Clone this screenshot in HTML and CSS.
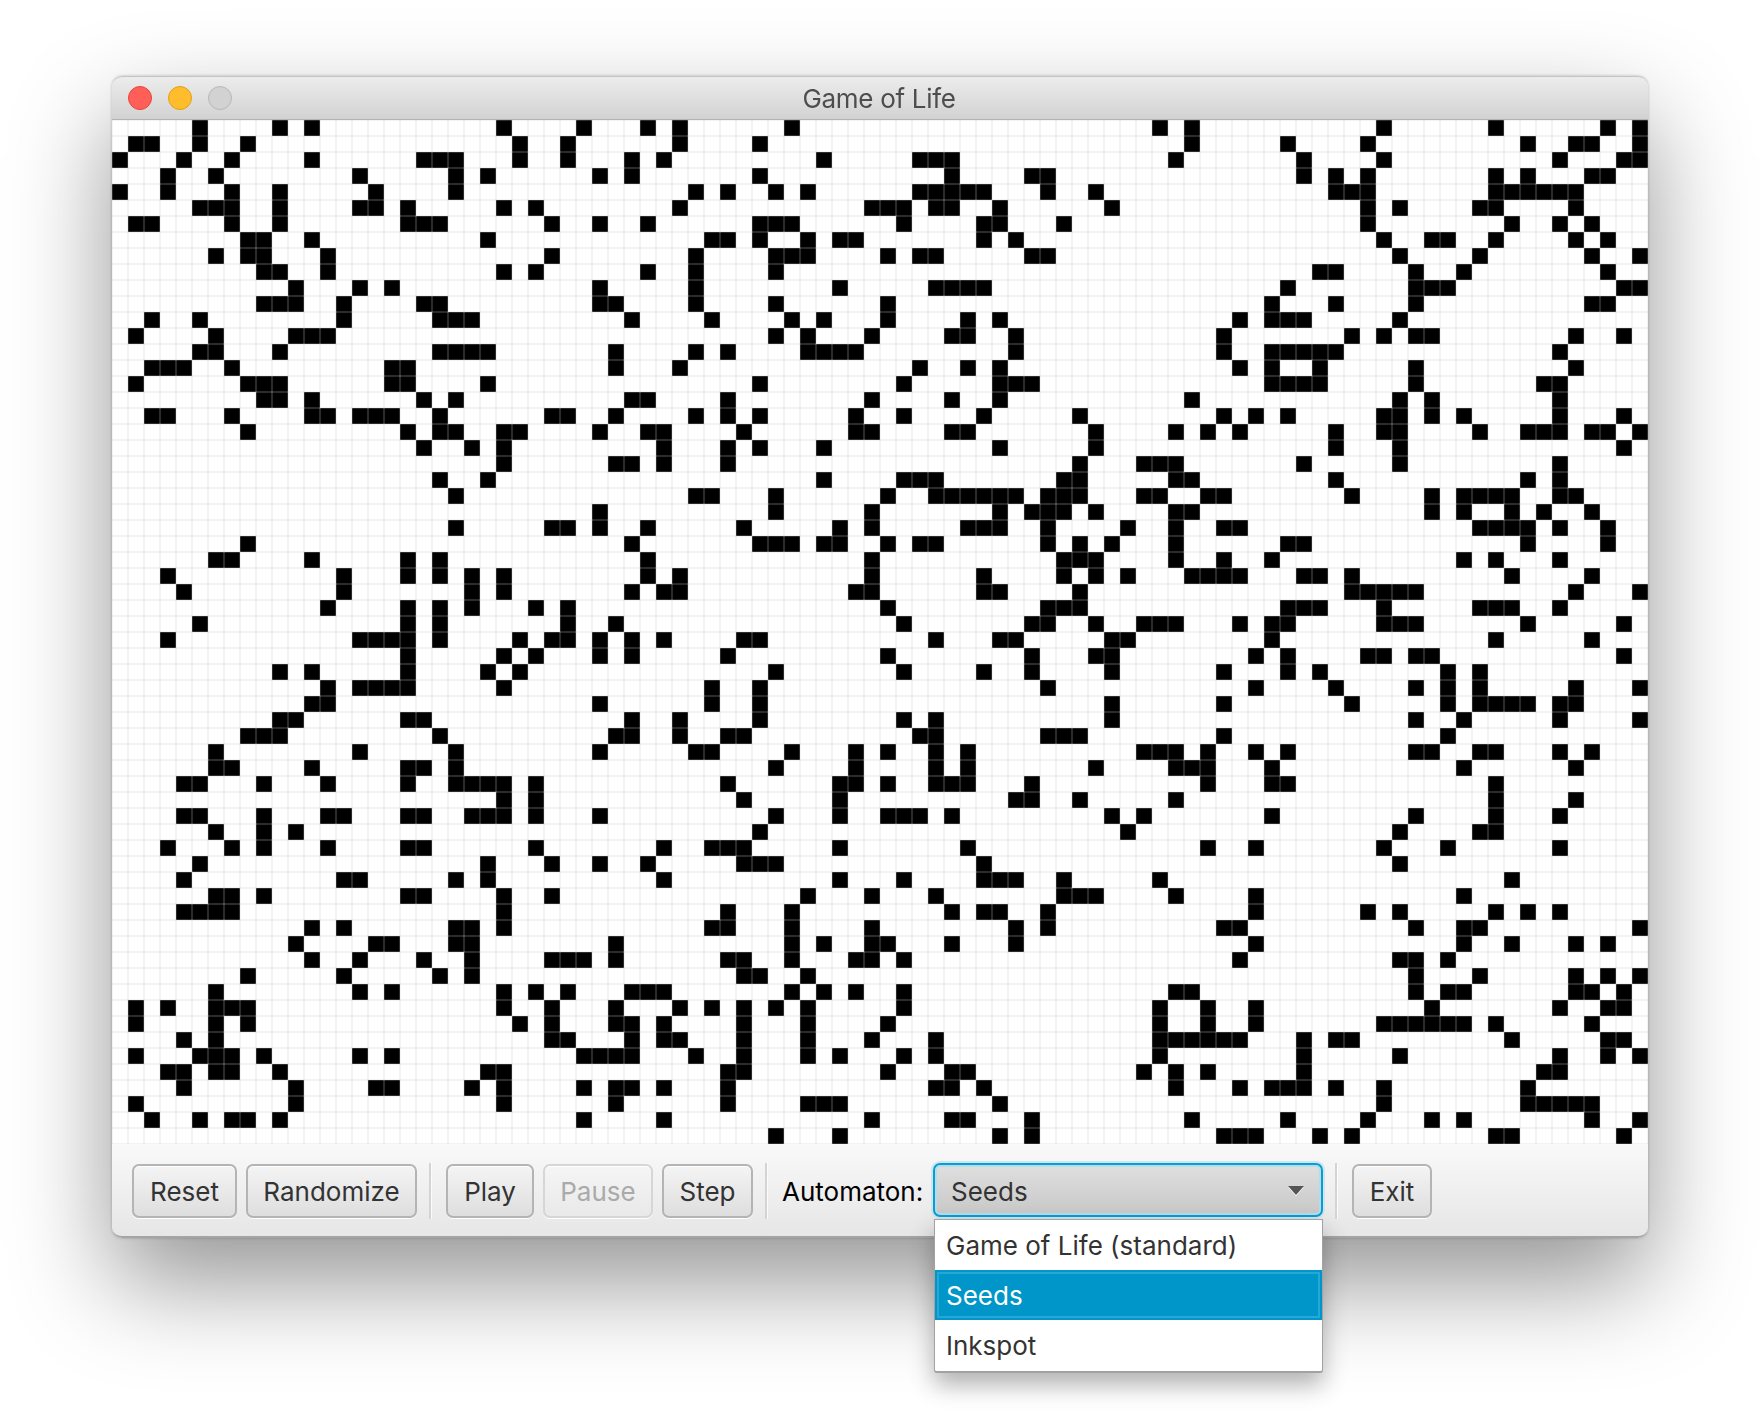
FILE: index.html
```html
<!DOCTYPE html>
<html lang="en">
<head>
<meta charset="utf-8">
<title>Game of Life</title>
<link rel="stylesheet" href="styles.css">
</head>
<body>
<main class="desktop">
  <section class="window">
    <header class="titlebar">
      <div class="lights">
        <span class="light light-close"></span>
        <span class="light light-min"></span>
        <span class="light light-zoom"></span>
      </div>
      <h1 class="title">Game of Life</h1>
    </header>
    <canvas id="board" class="board" width="1536" height="1024"></canvas>
    <div class="toolbar">
      <button class="btn btn-reset">Reset</button>
      <button class="btn btn-randomize">Randomize</button>
      <span class="sep"></span>
      <button class="btn btn-play">Play</button>
      <button class="btn btn-pause" disabled>Pause</button>
      <button class="btn btn-step">Step</button>
      <span class="sep"></span>
      <span class="label">Automaton:</span>
      <div class="combo">
        <div class="combo-face">
          <span class="combo-value">Seeds</span>
          <span class="combo-arrow"></span>
        </div>
        <ul class="popup">
          <li class="popup-item">Game of Life (standard)</li>
          <li class="popup-item popup-item-selected">Seeds</li>
          <li class="popup-item">Inkspot</li>
        </ul>
      </div>
      <span class="sep"></span>
      <button class="btn btn-exit">Exit</button>
    </div>
  </section>
</main>
<script src="script.js"></script>
</body>
</html>
```

FILE: styles.css
```css
* { box-sizing: border-box; }

html, body {
  margin: 0;
  padding: 0;
  background: #fff;
}

body {
  font-family: Inter, "Liberation Sans", sans-serif;
  font-size: 26px;
  overflow: hidden;
}

.desktop {
  width: 1760px;
  height: 1414px;
  padding: 76px 112px 0;
}

.window {
  width: 1536px;
  height: 1162px;
  display: flex;
  flex-direction: column;
  border-radius: 10px;
  box-shadow: 0 44px 100px rgba(0, 0, 0, .42), 0 0 3px rgba(0, 0, 0, .25);
}

.titlebar {
  position: relative;
  height: 44px;
  flex: none;
  display: flex;
  align-items: center;
  justify-content: center;
  background: linear-gradient(#ececec, #d2d2d2);
  border-top: 1px solid #c4c4c4;
  border-bottom: 1px solid #b2b2b2;
  border-radius: 10px 10px 0 0;
}

.lights {
  position: absolute;
  left: 16px;
  top: 9px;
  display: flex;
  gap: 16px;
}

.light {
  width: 24px;
  height: 24px;
  border-radius: 50%;
  border: 1px solid;
}

.light-close { background: #ff5f57; border-color: #e2463f; }
.light-min { background: #ffbd2e; border-color: #e1a116; }
.light-zoom { background: #d2d2d2; border-color: #b8b8b8; }

.title {
  margin: 0;
  padding: 2px 2px 0 0;
  font-size: 26px;
  font-weight: 400;
  line-height: 44px;
  letter-spacing: -.3px;
  color: #4d4d4d;
}

.board {
  display: block;
  flex: none;
  width: 1536px;
  height: 1024px;
  background: #fff;
}

.toolbar {
  flex: 1;
  display: flex;
  align-items: flex-start;
  gap: 9px;
  padding: 20px 20px 0;
  background: linear-gradient(#f9f9f9, #e6e6e6);
  border-bottom: 2px solid #a4a4a4;
  border-radius: 0 0 10px 10px;
}

.btn {
  flex: none;
  height: 54px;
  padding: 1px 0 0;
  font: inherit;
  color: #333;
  background: linear-gradient(#f4f4f4, #dedede);
  border: 2px solid #b4b4b4;
  border-radius: 7px;
  box-shadow: inset 0 1px 0 #fff, 0 1px 0 #fff;
}

.btn:disabled {
  color: #aaa;
  background: linear-gradient(#f5f5f5, #e9e9e9);
  border-color: #d6d6d6;
}

.btn-reset { width: 105px; }
.btn-randomize { width: 171px; }
.btn-play { width: 88px; }
.btn-pause { width: 110px; }
.btn-step { width: 91px; }
.btn-exit { width: 80px; }

.sep {
  flex: none;
  width: 3px;
  height: 56px;
  margin: -1px 5px 0 3px;
  background: #d4d4d4;
  border-right: 1px solid #fbfbfb;
}

.label {
  flex: none;
  width: 142px;
  line-height: 55px;
  color: #000;
}

.combo {
  position: relative;
  flex: none;
  width: 390px;
  height: 54px;
  margin-top: -1px;
}

.combo-face {
  height: 100%;
  display: flex;
  align-items: center;
  justify-content: space-between;
  padding: 0 17px 0 16px;
  color: #333;
  background: linear-gradient(#dfdfdf, #c8c8c8);
  border: 2px solid #02a0d8;
  border-radius: 7px;
  box-shadow: inset 0 0 0 2px #b9dbe8, 0 0 0 2px #cfe6ef;
}

.combo-value {
  padding-top: 3px;
}

.combo-arrow {
  width: 0;
  height: 0;
  border-left: 8px solid transparent;
  border-right: 8px solid transparent;
  border-top: 9px solid #555;
  filter: drop-shadow(0 1px 0 #fff);
}

.popup {
  position: absolute;
  left: 1px;
  top: 56px;
  width: 389px;
  height: 154px;
  margin: 0;
  padding: 0;
  list-style: none;
  background: #fff;
  border: 1px solid #a2a2a2;
  border-bottom-width: 2px;
  border-radius: 0 0 3px 3px;
  box-shadow: 0 12px 24px rgba(0, 0, 0, .3);
}

.popup-item {
  height: 50px;
  padding-left: 11px;
  line-height: 52px;
  color: #333;
}

.popup-item-selected {
  color: #fff;
  background: #0096c9;
  box-shadow: inset 0 0 0 2px #0096c9, inset 0 0 0 4px #25a8d5;
}
```

FILE: script.js
```js
var ROWS = [
"5 10 12 24 29 33 35 42 65 67 79 86 93 95",
"1 2 5 8 25 28 35 40 67 73 78 88 91 92 95",
"0 4 7 12 19 20 21 25 28 32 34 44 50 51 52 66 74 79 90 94 95",
"3 6 15 21 23 30 32 40 52 57 58 74 76 78 86 88 92 93",
"0 3 7 10 16 21 36 38 41 43 50 51 52 53 54 58 61 76 77 78 86 87 88 89 90 91",
"5 6 7 10 15 16 18 24 26 35 47 48 49 51 52 55 62 78 80 85 86 91",
"1 2 7 10 18 19 20 27 30 33 40 41 42 49 54 55 59 78 87 90 92",
"8 9 12 23 37 38 40 43 45 46 54 56 79 82 83 86 91 93",
"6 8 9 13 27 36 41 42 43 48 50 51 57 58 80 85 92 95",
"9 10 13 24 26 33 36 41 75 76 81 84 93",
"11 15 17 30 36 45 51 52 53 54 73 81 82 83 94 95",
"9 10 11 14 19 20 30 31 36 41 48 72 76 81 92 93",
"2 5 14 20 21 22 32 37 42 44 48 53 55 70 72 73 74 80",
"1 6 11 12 13 41 43 47 52 53 56 69 77 79 81 82 91 94",
"5 6 10 20 21 22 23 31 36 38 43 44 45 46 56 69 72 73 74 75 76 90",
"2 3 4 7 17 18 31 35 50 53 55 70 72 75 81 91",
"1 8 9 10 17 18 23 40 49 55 56 57 72 73 74 75 81 89 90",
"9 10 12 19 21 32 33 38 47 52 55 67 80 82 90",
"2 3 7 12 13 15 16 17 20 27 28 31 36 38 40 46 49 54 60 69 71 73 79 80 82 84 90 94",
"8 18 20 21 24 25 30 33 34 39 46 47 52 53 61 66 68 70 76 79 80 85 88 89 90 92 93 95",
"19 22 24 34 38 40 44 55 61 76 80 94",
"24 31 32 34 38 60 64 65 66 74 80 90",
"20 23 44 49 50 51 59 60 66 67 76 88 90",
"21 36 37 41 48 51 52 53 54 55 56 58 59 60 64 65 68 69 77 82 84 85 86 87 90 91",
"30 41 47 55 57 58 59 61 66 67 82 84 87 89 92",
"21 27 28 30 33 39 45 47 53 54 55 58 63 66 69 70 85 86 87 88 90 93",
"8 32 40 41 42 44 45 48 50 51 58 60 62 66 73 74 88 93",
"6 7 12 18 20 33 47 59 60 61 66 69 72 84 86 90",
"3 14 18 20 22 24 33 35 47 54 59 61 63 67 68 69 70 74 75 77 87 92",
"4 14 22 24 32 34 35 46 47 54 55 60 77 78 79 80 81 91 95",
"13 18 20 22 26 28 48 58 59 60 73 74 75 79 85 86 87 90",
"5 18 20 28 31 49 57 58 61 64 65 66 70 72 73 79 80 81 88 94",
"3 15 16 17 18 20 25 27 28 30 32 34 39 40 51 55 56 62 63 72 86 92",
"18 24 26 30 32 38 48 57 61 62 71 73 78 79 81 82 94",
"10 12 18 23 25 41 49 54 57 62 69 73 75 83 85",
"13 15 16 17 18 24 37 40 58 71 76 81 83 85 91 95",
"12 13 30 37 40 62 69 77 83 85 86 87 88 90 91",
"10 11 18 19 32 35 40 49 51 62 81 84 90 95",
"8 9 10 20 31 32 35 38 39 50 51 58 59 60 69 83",
"6 15 21 30 36 37 42 46 48 51 53 64 65 66 68 71 73 81 82 85 86 90 92",
"6 7 12 18 19 21 41 46 51 53 61 66 67 68 72 84 91",
"4 5 9 13 18 21 22 23 24 26 38 45 46 48 51 52 53 57 68 72 73 86",
"24 26 39 45 56 57 60 66 86 91",
"4 5 9 13 14 18 19 22 23 24 26 30 41 45 48 49 50 52 62 64 72 81 86 90",
"6 9 11 40 63 80 85 86",
"3 7 9 13 18 19 26 34 37 38 39 45 53 68 71 79 83 90",
"5 23 27 30 33 39 40 41 54 80",
"4 14 15 21 23 34 45 49 54 55 56 59 65 87",
"6 7 9 18 19 24 27 43 47 51 59 60 61 66 71 84",
"4 5 6 7 24 38 42 52 54 55 58 71 78 80 86 88 90",
"12 14 21 22 24 37 38 42 47 56 58 69 70 81 84 85 95",
"11 16 17 21 22 31 42 44 47 48 52 56 71 84 87 91 93",
"12 15 19 22 27 28 29 31 38 39 42 46 47 49 70 80 81 83",
"8 14 20 22 39 40 43 81 85 91 93 95",
"6 15 17 24 26 28 32 33 34 42 44 46 49 66 67 81 83 84 91 92 94",
"1 3 6 7 8 24 27 31 35 37 39 41 43 49 65 68 71 82 90 93 94",
"1 6 8 25 27 31 32 34 39 43 48 65 68 71 79 80 81 82 83 84 86 92",
"4 6 27 28 32 34 35 39 43 47 51 65 66 67 68 69 70 74 76 77 87 93 94",
"1 5 6 7 9 15 17 29 30 31 32 36 39 43 45 49 51 65 74 80 90 93 95",
"3 4 6 7 10 23 24 38 39 48 52 53 64 66 68 74 89 90",
"4 11 16 17 22 24 29 31 32 34 38 51 52 54 66 70 72 73 74 76 79 88",
"1 11 24 31 38 43 44 45 55 79 88 89 90 91 92",
"2 5 7 8 10 29 34 47 52 53 57 67 73 78 82 84 92 95",
"41 45 55 57 69 70 71 75 77 86 87 94"
];

var CELL = 16;
var board = document.getElementById("board");
var ctx = board.getContext("2d");

ctx.fillStyle = "#fff";
ctx.fillRect(0, 0, board.width, board.height);

ctx.fillStyle = "#000";
ROWS.forEach(function (row, r) {
  row.split(" ").forEach(function (c) {
    ctx.fillRect(+c * CELL, r * CELL, CELL, CELL);
  });
});

ctx.fillStyle = "rgba(200, 200, 200, .22)";
for (var x = 0; x <= board.width; x += CELL) {
  ctx.fillRect(x - 1, 0, 2, board.height);
}
for (var y = 0; y <= board.height; y += CELL) {
  ctx.fillRect(0, y - 1, board.width, 2);
}
```
